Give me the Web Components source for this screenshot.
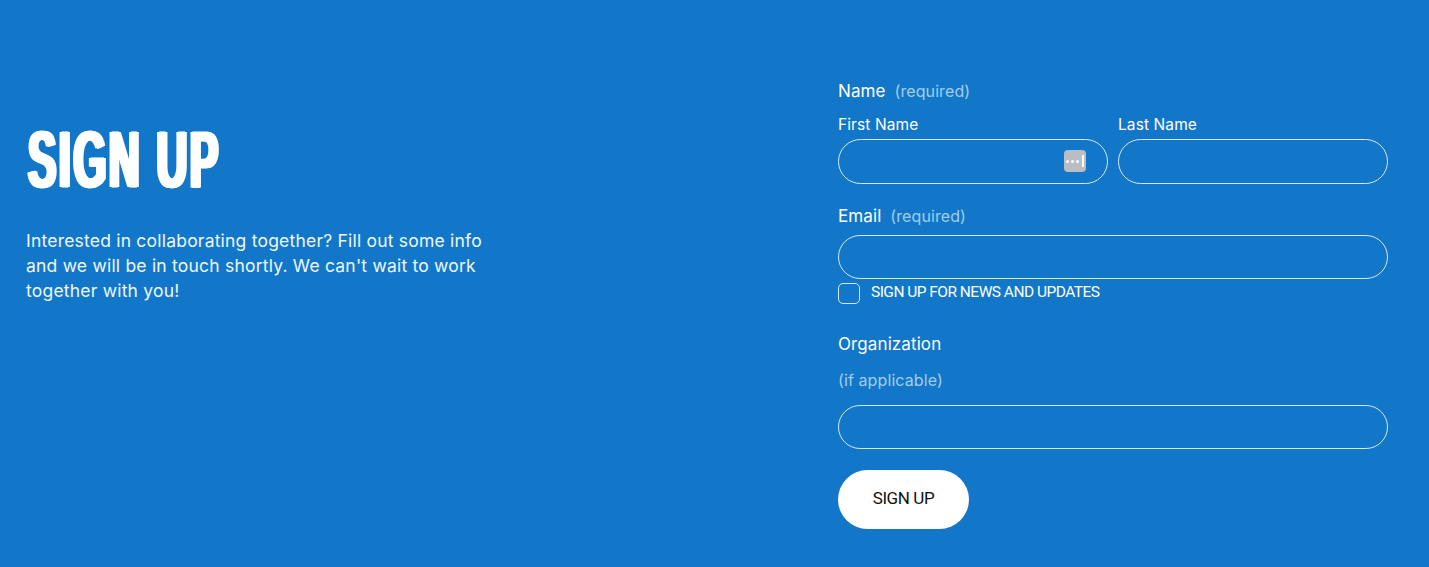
<!DOCTYPE html>
<html lang="en">
<head>
<meta charset="utf-8">
<title>Sign up</title>
<style>
  html, body { margin: 0; height: 100%; }
  body { background: #1277c9; color: #fff; font-family: "Inter", "Liberation Sans", sans-serif; }
</style>
</head>
<body>
<signup-section>
  <intro-panel slot="intro" heading="SIGN UP">Interested in collaborating together? Fill out some info and we will be in touch shortly. We can't wait to work together with you!</intro-panel>
  <signup-form slot="form"></signup-form>
</signup-section>

<script>
class SignupSection extends HTMLElement {
  constructor() {
    super();
    this.attachShadow({ mode: "open" }).innerHTML = `
      <style>
        :host { display: grid; grid-template-columns: 838px 550px; height: 567px; overflow: hidden; }
        .left { padding: 0 0 0 26px; }
      </style>
      <div class="left"><slot name="intro"></slot></div>
      <div><slot name="form"></slot></div>
    `;
  }
}

class IntroPanel extends HTMLElement {
  constructor() {
    super();
    this.attachShadow({ mode: "open" }).innerHTML = `
      <style>
        :host { display: block; padding-top: 116px; width: 470px; }
        h1 {
          margin: 0 0 24px;
          height: 88px;
          font: 700 80px/88px "Liberation Sans", sans-serif;
          letter-spacing: 5px;
          -webkit-text-stroke: 1px #fff;
          text-shadow: 2px 0 #fff, -2px 0 #fff, 4px 0 #fff, -4px 0 #fff;
          white-space: nowrap;
          transform: translateX(2px) scaleX(.53);
          transform-origin: left center;
        }
        p { margin: 0; font: 400 17.5px/25px "Inter", sans-serif; letter-spacing: .21px; color: #eef8ff; }
      </style>
      <h1></h1>
      <p><slot></slot></p>
    `;
    this.shadowRoot.querySelector("h1").textContent = this.getAttribute("heading");
  }
}

class FieldLabel extends HTMLElement {
  constructor() {
    super();
    this.attachShadow({ mode: "open" }).innerHTML = `
      <style>
        :host { display: block; font: 400 17px/22px "Inter", sans-serif; letter-spacing: .1px; color: #fff; }
        ::slotted(span) { color: #a3cdec; margin-left: 4px; font-size: 16px; }
      </style>
      <slot></slot>
    `;
  }
}

class PillInput extends HTMLElement {
  constructor() {
    super();
    this.attachShadow({ mode: "open" }).innerHTML = `
      <style>
        :host { display: block; position: relative; }
        input {
          display: block; box-sizing: border-box; width: 100%; height: var(--h, 44px);
          background: transparent; border: 1px solid #d3eafb; border-radius: 23px;
          padding: 0 20px; outline: none; color: #fff; font: 16px "Inter", sans-serif;
        }
        .key {
          position: absolute; right: 22px; top: 11px; width: 22px; height: 22px;
          border-radius: 4px; background: #b9bdc4;
          display: none; align-items: center; justify-content: center; gap: 2px;
        }
        :host([autofill]) .key { display: flex; }
        .key i { width: 3px; height: 3px; border-radius: 50%; background: #fff; }
        .key b { width: 1.5px; height: 12px; background: #fff; margin-left: 1px; }
      </style>
      <input type="text" aria-label="${this.getAttribute("label") || ""}">
      <div class="key"><i></i><i></i><i></i><b></b></div>
    `;
  }
}

class CheckRow extends HTMLElement {
  constructor() {
    super();
    this.attachShadow({ mode: "open" }).innerHTML = `
      <style>
        :host { display: flex; align-items: center; gap: 11px; font: 400 15.5px/20px "Roboto", sans-serif; letter-spacing: -.53px; color: #fff; }
        .box { box-sizing: border-box; width: 22px; height: 21px; border: 1px solid #d3eafb; border-radius: 5px; }
        span { margin-bottom: 2px; }
      </style>
      <div class="box"></div>
      <span><slot></slot></span>
    `;
  }
}

class PillButton extends HTMLElement {
  constructor() {
    super();
    this.attachShadow({ mode: "open" }).innerHTML = `
      <style>
        :host { display: inline-block; }
        button {
          width: 131px; height: 59px; border: 0; border-radius: 30px; background: #fff;
          color: #111; font: 400 17px "Roboto", sans-serif; letter-spacing: -.4px; cursor: pointer; padding: 0 0 3px;
        }
      </style>
      <button type="button"><slot></slot></button>
    `;
  }
}

class SignupForm extends HTMLElement {
  constructor() {
    super();
    this.attachShadow({ mode: "open" }).innerHTML = `
      <style>
        :host { display: block; padding-top: 80px; }
        .names { display: grid; grid-template-columns: 270px 270px; column-gap: 10px; margin-top: 13px; }
        .sub { font-size: 15.5px; line-height: 20px; margin-bottom: 4px; display: block; }
        .email { margin-top: 21px; }
        .org { margin-top: 29px; }
        .hint { margin-top: 14px; }
        pill-input { --h: 44px; }
        .first { --h: 45px; }
        .gap-s { margin-top: 8px; }
        .gap-m { margin-top: 14px; }
        check-row { margin-top: 3px; }
        pill-button { margin-top: 21px; }
      </style>
      <field-label>Name <span>(required)</span></field-label>
      <div class="names">
        <div><field-label class="sub">First Name</field-label><pill-input class="first" label="First Name" autofill></pill-input></div>
        <div><field-label class="sub">Last Name</field-label><pill-input class="first" label="Last Name"></pill-input></div>
      </div>
      <field-label class="email">Email <span>(required)</span></field-label>
      <pill-input class="gap-s" label="Email"></pill-input>
      <check-row>SIGN UP FOR NEWS AND UPDATES</check-row>
      <field-label class="org">Organization</field-label>
      <field-label class="hint"><span style="margin:0">(if applicable)</span></field-label>
      <pill-input class="gap-m" label="Organization"></pill-input>
      <pill-button>SIGN UP</pill-button>
    `;
  }
}

customElements.define("field-label", FieldLabel);
customElements.define("pill-input", PillInput);
customElements.define("check-row", CheckRow);
customElements.define("pill-button", PillButton);
customElements.define("intro-panel", IntroPanel);
customElements.define("signup-form", SignupForm);
customElements.define("signup-section", SignupSection);
</script>
</body>
</html>
